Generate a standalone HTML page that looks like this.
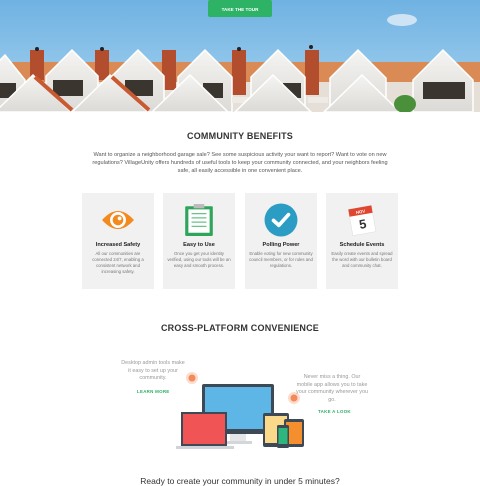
<!DOCTYPE html>
<html><head><meta charset="utf-8"><style>
*{margin:0;padding:0;box-sizing:border-box}
body{width:480px;height:480px;overflow:hidden;background:#fff;font-family:"Liberation Sans",sans-serif;color:#444;position:relative}
.abs{position:absolute}
h2{position:absolute;width:480px;text-align:center;font-size:9px;font-weight:bold;color:#333;letter-spacing:.2px}
.card{position:absolute;top:193px;width:72px;height:96px;background:#f1f1f1;text-align:center}
.card b{position:absolute;top:49px;left:0;right:0;font-size:5.6px;color:#222}
.card p{position:absolute;top:58px;left:4px;right:4px;font-size:4.3px;line-height:6px;color:#777}
.ic{position:absolute;left:19px;top:10px;width:34px;height:34px}
.t{position:absolute;font-size:5.4px;line-height:7.5px;color:#999;text-align:center}
.g{position:absolute;font-size:4.4px;font-weight:bold;color:#2dac60;letter-spacing:.3px}
</style></head><body>
<svg class="abs" style="left:0;top:0" width="480" height="112" viewBox="0 0 480 112">
<defs><linearGradient id="sky" x1="0" y1="0" x2="0" y2="1"><stop offset="0" stop-color="#6fb2e2"/><stop offset="1" stop-color="#a8d3f0"/></linearGradient>
<linearGradient id="w" x1="0" y1="0" x2="0" y2="1"><stop offset="0" stop-color="#f4f4f2"/><stop offset="1" stop-color="#dcdad6"/></linearGradient></defs>
<rect width="480" height="112" fill="url(#sky)"/>
<ellipse cx="402" cy="20" rx="15" ry="6" fill="#e3eff8" opacity=".8"/>
<rect x="0" y="62" width="480" height="50" fill="#e6dfd8"/>
<rect x="0" y="62" width="480" height="20" fill="#d98a55"/>
<g fill="#b24e2e"><rect x="30" y="50" width="14" height="30"/><rect x="95" y="50" width="14" height="30"/><rect x="162" y="50" width="14" height="40"/><rect x="232" y="50" width="14" height="45"/><rect x="305" y="50" width="14" height="45"/></g>
<g fill="#222"><circle cx="37" cy="49" r="2"/><circle cx="102" cy="49" r="2"/><circle cx="239" cy="49" r="2"/><circle cx="311" cy="47" r="2"/></g>
<g fill="url(#w)" stroke="#fff" stroke-width="1.5">
<polygon points="72,50 46,76 46,112 98,112 98,76"/>
<polygon points="138,50 112,76 112,112 164,112 164,76"/>
<polygon points="205,50 178,77 178,112 232,112 232,77"/>
<polygon points="278,50 251,77 251,112 305,112 305,77"/>
<polygon points="358,50 330,78 330,112 386,112 386,78"/>
<polygon points="443,50 413,80 413,112 473,112 473,80"/>
<polygon points="5,55 -20,80 -20,112 25,112 25,80"/>
</g>
<g fill="#3b3530"><rect x="53" y="80" width="30" height="16"/><rect x="125" y="80" width="28" height="16"/><rect x="203" y="83" width="20" height="15"/><rect x="283" y="83" width="18" height="15"/><rect x="423" y="82" width="42" height="17"/><rect x="0" y="83" width="16" height="15"/></g>
<g fill="#eeeae6"><rect x="232" y="97" width="18" height="6"/><rect x="308" y="97" width="20" height="6"/></g>
<g fill="url(#w)" stroke="#fff" stroke-width="1.5">
<polygon points="33,75 -5,112 71,112"/>
<polygon points="110,75 72,112 148,112"/>
<polygon points="190,75 152,112 228,112"/>
<polygon points="273,75 235,112 311,112"/>
<polygon points="362,75 324,112 400,112"/>
</g>
<g stroke="#c85a32" stroke-width="4"><line x1="35" y1="77" x2="72" y2="110"/><line x1="112" y1="77" x2="149" y2="110"/></g>
<ellipse cx="405" cy="104" rx="11" ry="9" fill="#4a8f3a"/>
<rect x="208" y="0" width="64" height="17" rx="2" fill="#2db266"/>
<text x="240" y="11" text-anchor="middle" font-size="4.6" font-weight="bold" fill="#fff" font-family="Liberation Sans">TAKE THE TOUR</text>
</svg>
<h2 style="top:131px">COMMUNITY BENEFITS</h2>
<div class="abs" style="left:88px;top:151px;width:304px;text-align:center;font-size:5.6px;line-height:8px;color:#555">Want to organize a neighborhood garage sale? See some suspicious activity your want to report? Want to vote on new regulations? VillageUnity offers hundreds of useful tools to keep your community connected, and your neighbors feeling safe, all easily accessible in one convenient place.</div>

<div class="card" style="left:82px"><svg class="ic" viewBox="0 0 32 32"><path d="M1 16 Q16 -1 31 16 Q16 33 1 16Z" fill="#f28a1f"/><circle cx="16" cy="16" r="7.5" fill="#fff"/><circle cx="16" cy="16" r="5" fill="#f28a1f"/><circle cx="17.5" cy="14.5" r="1.8" fill="#fff"/></svg><b>Increased Safety</b><p>All our communities are connected 24/7, enabling a consistent network and increasing safety.</p></div>
<div class="card" style="left:163px"><svg class="ic" viewBox="0 0 32 32"><rect x="3" y="3" width="26" height="28" rx="1" fill="#2ea55a"/><rect x="6" y="6" width="20" height="22" fill="#fff"/><rect x="11" y="1" width="10" height="4" fill="#bbb"/><g stroke="#6cc28a" stroke-width="1.2"><line x1="9" y1="10" x2="23" y2="10"/><line x1="9" y1="14" x2="23" y2="14"/><line x1="9" y1="18" x2="23" y2="18"/><line x1="9" y1="22" x2="23" y2="22"/></g></svg><b>Easy to Use</b><p>Once you get your identity verified, using our tools will be an easy and smooth process.</p></div>
<div class="card" style="left:245px"><svg class="ic" viewBox="0 0 32 32"><circle cx="16" cy="16" r="15.5" fill="#2b9cc4"/><path d="M9 16.5 L14 21 L23 11" stroke="#fff" stroke-width="3.5" fill="none" stroke-linecap="round" stroke-linejoin="round"/></svg><b>Polling Power</b><p>Enable voting for new community council members, or for rules and regulations.</p></div>
<div class="card" style="left:326px"><svg class="ic" viewBox="0 0 32 32"><g transform="rotate(-10 16 16)"><rect x="5" y="4" width="22" height="25" fill="#fff" stroke="#ddd" stroke-width=".5"/><rect x="5" y="4" width="22" height="7" fill="#e0452f"/><text x="16" y="9.5" text-anchor="middle" font-size="4" fill="#fff" font-weight="bold" font-family="Liberation Sans">NOV</text><text x="16" y="24" text-anchor="middle" font-size="12" fill="#333" font-weight="bold" font-family="Liberation Sans">5</text></g></svg><b>Schedule Events</b><p>Easily create events and spread the word with our bulletin board and community chat.</p></div>

<h2 style="top:323px">CROSS-PLATFORM CONVENIENCE</h2>
<div class="t" style="left:120px;top:360px;width:66px">Desktop admin tools make it easy to set up your community.</div>
<div class="g" style="left:137px;top:389px">LEARN MORE</div>
<div class="t" style="left:296px;top:374px;width:72px">Never miss a thing. Our mobile app allows you to take your community wherever you go.</div>
<div class="g" style="left:318px;top:409px">TAKE A LOOK</div>
<svg class="abs" style="left:176px;top:370px" width="134" height="86" viewBox="0 0 134 86">
<circle cx="16" cy="8" r="3.5" fill="#f28a5a"/><circle cx="16" cy="8" r="6" fill="#f28a5a" opacity=".3"/>
<circle cx="118" cy="28" r="3.5" fill="#f28a5a"/><circle cx="118" cy="28" r="6" fill="#f28a5a" opacity=".3"/>
<rect x="26" y="14" width="72" height="50" rx="2" fill="#3d4a55"/><rect x="29" y="17" width="66" height="42" fill="#5db6e6"/>
<rect x="54" y="64" width="16" height="8" fill="#e4e6e8"/><rect x="48" y="71" width="28" height="3" fill="#d4d7da"/>
<rect x="5" y="42" width="46" height="34" fill="#3d4a55"/><rect x="7" y="44" width="42" height="30" fill="#f05454"/><rect x="0" y="76" width="58" height="3" fill="#d0d4d8"/>
<rect x="87" y="43" width="26" height="34" rx="2" fill="#3d4a55"/><rect x="89" y="46" width="22" height="27" fill="#fbd98a"/>
<rect x="108" y="49" width="20" height="28" rx="2" fill="#3d4a55"/><rect x="110" y="52" width="16" height="22" fill="#f58e2c"/>
<rect x="101" y="55" width="12" height="23" rx="1.5" fill="#3d4a55"/><rect x="102.5" y="58" width="9" height="16" fill="#2fb57e"/>
</svg>
<div class="abs" style="left:0;top:476px;width:480px;text-align:center;font-size:8.5px;color:#333">Ready to create your community in under 5 minutes?</div>
</body></html>
